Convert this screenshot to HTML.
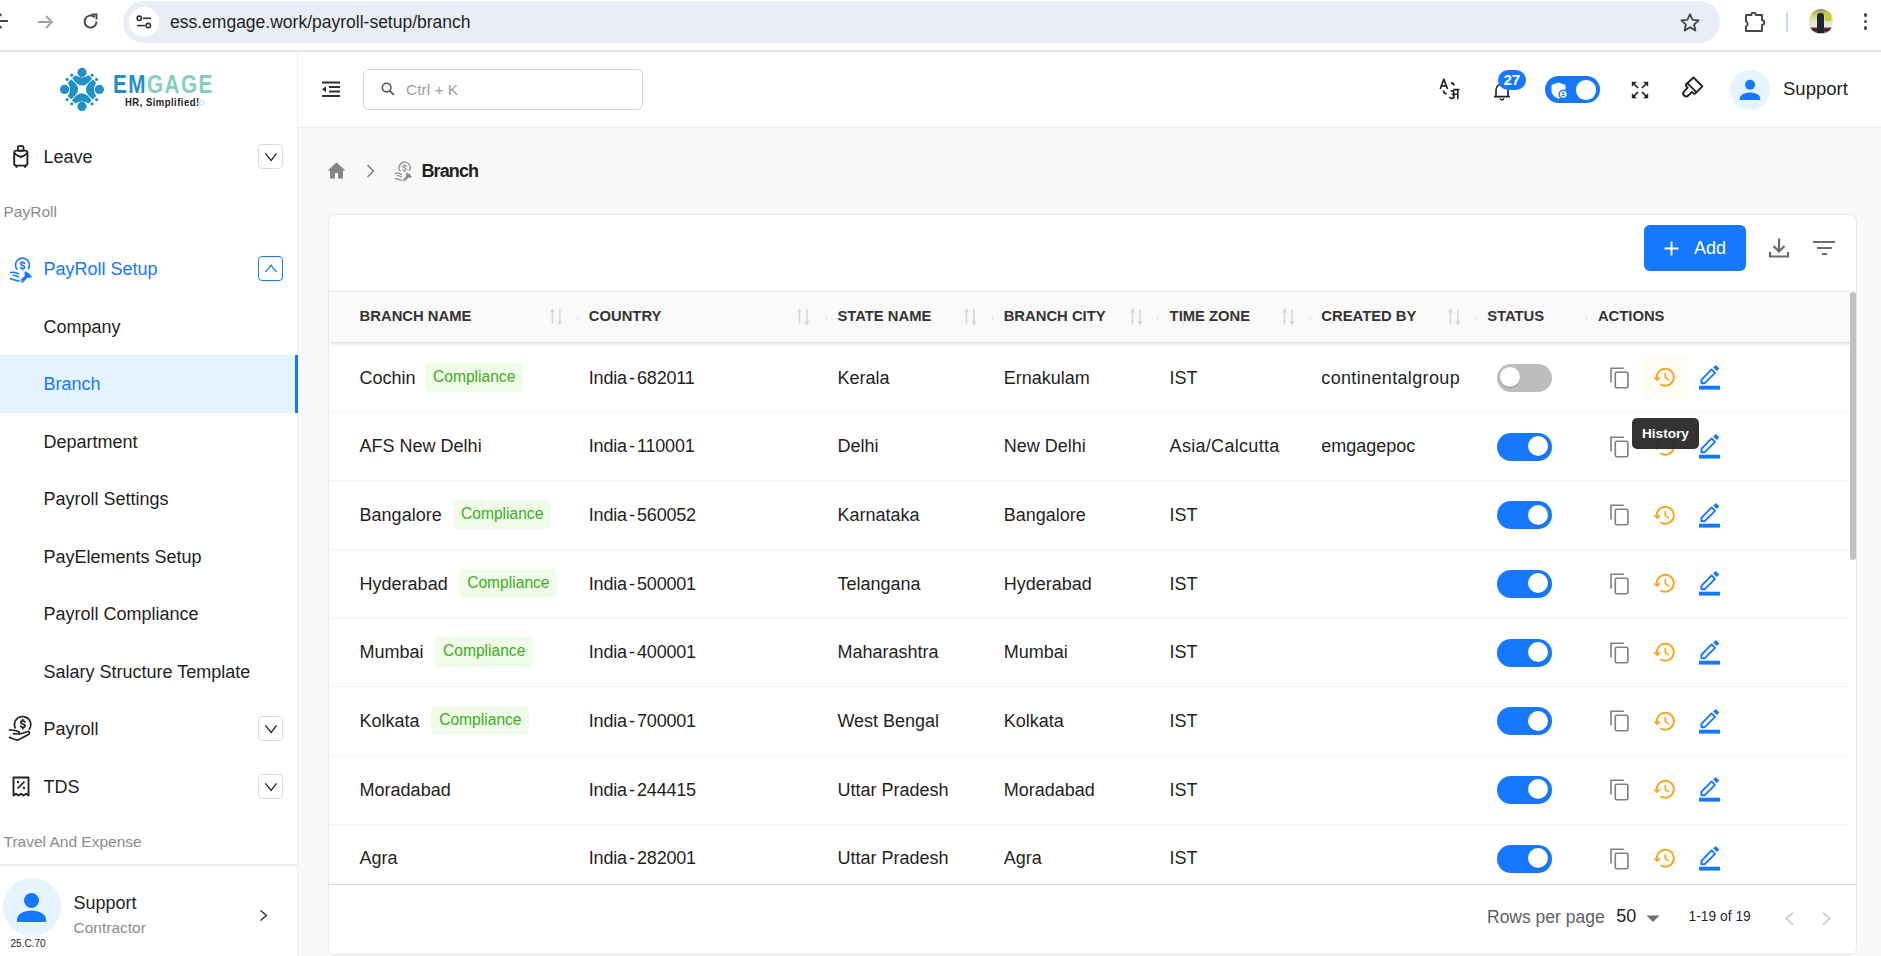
<!DOCTYPE html>
<html><head><meta charset="utf-8"><style>
*{box-sizing:border-box;margin:0;padding:0}
html,body{width:1881px;height:956px;overflow:hidden;background:#fff;font-family:"Liberation Sans",sans-serif;color:#212121}
.t{position:absolute;line-height:1;white-space:nowrap}
.b{position:absolute}
svg.b{overflow:visible}
</style></head><body>
<div class="b" style="left:0px;top:0px;width:1881px;height:50px;background:#fff"></div>
<div class="b" style="left:0px;top:50px;width:1881px;height:2px;background:#e1e3e6"></div>
<svg class="b" style="left:-9px;top:12px;" width="18" height="18" viewBox="0 0 18 18"><path d="M17 9H3.5M10.5 2L3.5 9l7 7" stroke="#474747" stroke-width="1.9" fill="none"/></svg>
<svg class="b" style="left:37px;top:14px;" width="17" height="16" viewBox="0 0 17 16"><path d="M1 8h14M9 2l6 6-6 6" stroke="#a0a0a0" stroke-width="1.8" fill="none"/></svg>
<svg class="b" style="left:82px;top:13px;" width="17" height="17" viewBox="0 0 17 17"><path d="M14.5 8.5A6 6 0 1 1 12.6 4.2" stroke="#474747" stroke-width="1.9" fill="none"/><path d="M9.5 1.5h5v5" stroke="#474747" stroke-width="1.9" fill="none"/></svg>
<div class="b" style="left:123px;top:1px;width:1597px;height:42px;background:#e9eef6;border-radius:21px"></div>
<div class="b" style="left:129px;top:7px;width:30px;height:30px;background:#fff;border-radius:50%"></div>
<svg class="b" style="left:136px;top:15px;" width="16" height="14" viewBox="0 0 16 14"><circle cx="3.3" cy="3.3" r="2.2" stroke="#333" stroke-width="1.6" fill="none"/><path d="M7 3.3h8" stroke="#333" stroke-width="1.6"/><circle cx="12.3" cy="10.6" r="2.2" stroke="#333" stroke-width="1.6" fill="none"/><path d="M1 10.6h8" stroke="#333" stroke-width="1.6"/></svg>
<div class="t" style="left:170px;top:13.99px;font-size:17.5px;color:#1f1f1f;font-weight:normal;">ess.emgage.work/payroll-setup/branch</div>
<svg class="b" style="left:1679px;top:11.6px;" width="22" height="22" viewBox="0 0 22 22"><path d="M11 2.2l2.6 5.6 6.1.6-4.6 4.1 1.3 6-5.4-3.1-5.4 3.1 1.3-6L2.3 8.4l6.1-.6z" stroke="#474747" stroke-width="1.8" fill="none" stroke-linejoin="round"/></svg>
<svg class="b" style="left:1743px;top:9px;" width="24" height="24" viewBox="0 0 24 24"><path d="M3 6h5.3a2.3 2.3 0 0 1 4.6 0H19v5.3a2.3 2.3 0 0 1 0 4.6V22H3v-4.8a2.4 2.4 0 0 0 0-4.6z" stroke="#474747" stroke-width="1.9" fill="none" stroke-linejoin="round"/></svg>
<div class="b" style="left:1785.7px;top:12px;width:2px;height:19.5px;background:#c5d8fa;border-radius:1px"></div>
<div class="b" style="left:1808.5px;top:9px;width:24.6px;height:24.6px;border-radius:50%;overflow:hidden;background:linear-gradient(180deg,#9a8f6a 0%,#d8d36a 25%,#e8e6dc 55%,#efe9df 70%,#6a2a2a 78%,#3a2020 86%,#d9c9a9 100%)"><div style="position:absolute;left:8px;top:4px;width:7px;height:20px;background:#1f2633;border-radius:3px 3px 0 0"></div><div style="position:absolute;left:16px;top:3px;width:6px;height:9px;background:#c8cc30"></div></div>
<div class="b" style="left:1863.5px;top:12.799999999999999px;width:3.8px;height:3.8px;background:#474747;border-radius:50%"></div>
<div class="b" style="left:1863.5px;top:19.6px;width:3.8px;height:3.8px;background:#474747;border-radius:50%"></div>
<div class="b" style="left:1863.5px;top:26.400000000000002px;width:3.8px;height:3.8px;background:#474747;border-radius:50%"></div>
<div class="b" style="left:0px;top:52px;width:297px;height:904px;background:#fff"></div>
<div class="b" style="left:297px;top:52px;width:1px;height:904px;background:#eeeeee"></div>
<svg class="b" style="left:59px;top:66px;" width="46" height="46" viewBox="0 0 46 46"><g transform="translate(23 23.4)" fill="#2190c6">
<circle cx="0" cy="-17" r="4.6"/><circle cx="0" cy="17" r="4.6"/><circle cx="-17.4" cy="0" r="4.6"/><circle cx="17.4" cy="0" r="4.6"/>
<path d="M-9.8 -11.2L-6.6 -14.1Q0 -9.9 6.7 -14.1L10.1 -11Q0 3.3 -9.8 -11.2Z"/><path d="M-9.8 -11.2L-6.6 -14.1Q0 -9.9 6.7 -14.1L10.1 -11Q0 3.3 -9.8 -11.2Z" transform="rotate(90)"/><path d="M-9.8 -11.2L-6.6 -14.1Q0 -9.9 6.7 -14.1L10.1 -11Q0 3.3 -9.8 -11.2Z" transform="rotate(180)"/><path d="M-9.8 -11.2L-6.6 -14.1Q0 -9.9 6.7 -14.1L10.1 -11Q0 3.3 -9.8 -11.2Z" transform="rotate(270)"/>
<circle cx="-10.3" cy="-14.2" r="1.6"/><circle cx="10.1" cy="-14.2" r="1.6"/><circle cx="-14.8" cy="-10" r="1.6"/><circle cx="14.5" cy="-10" r="1.6"/>
<circle cx="-14.8" cy="10.2" r="1.6"/><circle cx="14.5" cy="10.2" r="1.6"/><circle cx="-10.3" cy="14.4" r="1.6"/><circle cx="10.1" cy="14.4" r="1.6"/>
</g></svg>
<svg class="b" style="left:110px;top:70px;" width="110" height="40" viewBox="0 0 110 40"><g transform="translate(3 23.4) scale(0.8 1)"><text x="0" y="0" font-family="Liberation Sans" font-weight="bold" font-size="25.8" letter-spacing="1.9"><tspan fill="#2190c6">EM</tspan><tspan fill="#86d0b6">GAGE</tspan></text></g>
<g transform="translate(15 36) scale(0.85 1)"><text x="0" y="0" font-family="Liberation Sans" font-weight="bold" font-size="11.2" fill="#222" letter-spacing="0.55">HR, Simplified!</text></g>
<circle cx="91.7" cy="33" r="2.3" stroke="#8ccbed" stroke-width="0.8" fill="none"/></svg>
<svg class="b" style="left:12px;top:145px;" width="18" height="23" viewBox="0 0 18 23"><rect x="5.9" y="1.2" width="5.6" height="4.6" rx="0.8" stroke="#222" stroke-width="1.8" fill="none"/><rect x="2.2" y="5.6" width="13.2" height="15" rx="2" stroke="#222" stroke-width="1.9" fill="none"/><path d="M2.4 8.2Q8.8 15 15.2 8.2M8.8 11.6v1.6" stroke="#222" stroke-width="1.7" fill="none"/><path d="M4.5 20.8v1M13.1 20.8v1" stroke="#222" stroke-width="2.2" stroke-linecap="round"/></svg>
<div class="t" style="left:43.5px;top:147.96px;font-size:18px;color:#1f1f1f;font-weight:normal;">Leave</div>
<div class="b" style="left:258px;top:144px;width:25px;height:25px;border:1px solid #dcdcdc;border-radius:4px;background:#fff"></div>
<svg class="b" style="left:258px;top:144px;" width="25" height="25" viewBox="0 0 25 25"><path d="M7.3 9.3L13.2 16.4L18.6 9.3" stroke="#222" stroke-width="1.25" fill="none"/></svg>
<div class="t" style="left:3.5px;top:203.88px;font-size:15.5px;color:#8c8c8c;font-weight:normal;">PayRoll</div>
<svg class="b" style="left:9px;top:258px;" width="23" height="24" viewBox="0 0 23 24"><g stroke="#1677ff" fill="none" stroke-width="1.6" stroke-linecap="round">
<path d="M7.84 11.21A7 7 0 1 1 19.5 10.7"/>
<path d="M15.6 5.6c-.5-.8-1.3-1.1-2.1-1.1-1.1 0-2 .6-2 1.5 0 1.9 4.2 1.1 4.2 3.1 0 1-.9 1.5-2.1 1.5-.9 0-1.7-.4-2.2-1.1M13.5 3.7v.9M13.5 10.6v1.2"/>
<path d="M1.6 14.5c2.5-.6 5.5-.3 8 1.4M4.4 17.3c2 .1 3.8.6 5.2 1.5M1.6 20.8c2.5.8 5.5 1.6 8 2.3"/>
</g>
<path d="M13 23L19.2 16.6" stroke="#1677ff" stroke-width="3.3" stroke-linecap="round"/>
<path d="M17.4 13.8a3.1 3.1 0 0 0 4.6 4" stroke="#1677ff" stroke-width="2.8" fill="none"/>
<circle cx="13" cy="23" r="0.7" fill="#fff"/></svg>
<div class="t" style="left:43.5px;top:260.46px;font-size:18px;color:#1677ff;font-weight:normal;">PayRoll Setup</div>
<div class="b" style="left:258px;top:256px;width:25px;height:25px;border:1px solid #1677ff;border-radius:4px;background:#fff"></div>
<svg class="b" style="left:258px;top:256px;" width="25" height="25" viewBox="0 0 25 25"><path d="M7.3 16.2L13 9.3L18.6 16.2" stroke="#1677ff" stroke-width="1.25" fill="none"/></svg>
<div class="b" style="left:0px;top:355px;width:295px;height:58px;background:#e6f4ff"></div>
<div class="b" style="left:295px;top:355px;width:2.5px;height:58px;background:#1677ff"></div>
<div class="t" style="left:43.5px;top:317.76px;font-size:18px;color:#1f1f1f;font-weight:normal;">Company</div>
<div class="t" style="left:43.5px;top:374.96px;font-size:18px;color:#1677ff;font-weight:normal;">Branch</div>
<div class="t" style="left:43.5px;top:432.96px;font-size:18px;color:#1f1f1f;font-weight:normal;">Department</div>
<div class="t" style="left:43.5px;top:489.96px;font-size:18px;color:#1f1f1f;font-weight:normal;">Payroll Settings</div>
<div class="t" style="left:43.5px;top:547.56px;font-size:18px;color:#1f1f1f;font-weight:normal;">PayElements Setup</div>
<div class="t" style="left:43.5px;top:604.76px;font-size:18px;color:#1f1f1f;font-weight:normal;">Payroll Compliance</div>
<div class="t" style="left:43.5px;top:662.56px;font-size:18px;color:#1f1f1f;font-weight:normal;">Salary Structure Template</div>
<svg class="b" style="left:9px;top:716px;" width="24" height="26" viewBox="0 0 24 26"><g stroke="#222" fill="none" stroke-width="1.7" stroke-linecap="round" stroke-linejoin="round">
<path d="M6.17 11.83A8.1 8.1 0 1 1 20.26 13.21"/>
<path d="M15.9 6c-.5-.8-1.2-1.1-2.1-1.1-1.1 0-2 .6-2 1.6 0 2 4.3 1.1 4.3 3.2 0 1-.9 1.6-2.2 1.6-1 0-1.8-.4-2.3-1.1M13.8 3.6v1.2M13.8 11.4v1.3"/>
<path d="M0.6 14.2C3.5 13.6 6.5 14.3 9.5 15.6C11 16.3 10.5 18 9 18L4.5 17.6"/>
<path d="M0.6 21.4C3.5 22.6 6 23.8 8.6 24.2L19.5 18.4C21.2 17.4 20.6 15.2 18.6 15.7L10.6 18"/>
</g></svg>
<div class="t" style="left:43.5px;top:720.16px;font-size:18px;color:#1f1f1f;font-weight:normal;">Payroll</div>
<div class="b" style="left:258px;top:716px;width:25px;height:25px;border:1px solid #dcdcdc;border-radius:4px;background:#fff"></div>
<svg class="b" style="left:258px;top:716px;" width="25" height="25" viewBox="0 0 25 25"><path d="M7.3 9.3L13.2 16.4L18.6 9.3" stroke="#222" stroke-width="1.25" fill="none"/></svg>
<svg class="b" style="left:12px;top:776px;" width="18" height="21" viewBox="0 0 18 21"><path d="M1.5 1.5h15v18l-2.5-1.8-2.5 1.8-2.5-1.8-2.5 1.8-2.5-1.8-2.5 1.8z" stroke="#222" stroke-width="1.9" fill="none" stroke-linejoin="round"/><path d="M5.5 12.5l7-7" stroke="#222" stroke-width="1.7"/><circle cx="6" cy="6" r="1.2" fill="#222"/><circle cx="12" cy="12" r="1.2" fill="#222"/></svg>
<div class="t" style="left:43.5px;top:777.96px;font-size:18px;color:#1f1f1f;font-weight:normal;">TDS</div>
<div class="b" style="left:258px;top:774px;width:25px;height:25px;border:1px solid #dcdcdc;border-radius:4px;background:#fff"></div>
<svg class="b" style="left:258px;top:774px;" width="25" height="25" viewBox="0 0 25 25"><path d="M7.3 9.3L13.2 16.4L18.6 9.3" stroke="#222" stroke-width="1.25" fill="none"/></svg>
<div class="t" style="left:3.5px;top:834.18px;font-size:15.5px;color:#8c8c8c;font-weight:normal;">Travel And Expense</div>
<div class="b" style="left:0px;top:864px;width:297px;height:2px;background:#eeeeee"></div>
<div class="b" style="left:3px;top:878px;width:58px;height:58px;background:#e6f4ff;border-radius:50%"></div>
<svg class="b" style="left:16px;top:892px;" width="31" height="31" viewBox="0 0 31 31"><circle cx="15.5" cy="8.5" r="7.5" fill="#1677ff"/><path d="M1 30v-2.5C1 22 8 18.5 15.5 18.5S30 22 30 27.5V30z" fill="#1677ff"/></svg>
<div class="t" style="left:73.5px;top:893.76px;font-size:18px;color:#1f1f1f;font-weight:normal;">Support</div>
<div class="t" style="left:73.5px;top:920.48px;font-size:15.5px;color:#8c8c8c;font-weight:normal;">Contractor</div>
<svg class="b" style="left:259px;top:909px;" width="10" height="13" viewBox="0 0 10 13"><path d="M1.5 1.5l6 5-6 5" stroke="#333" stroke-width="1.5" fill="none"/></svg>
<div class="t" style="left:10.5px;top:938.53px;font-size:10px;color:#222;font-weight:normal;">25.C.70</div>
<div class="b" style="left:298px;top:52px;width:1583px;height:76px;background:#fff"></div>
<div class="b" style="left:298px;top:127px;width:1583px;height:1px;background:#eeeeee"></div>
<svg class="b" style="left:321px;top:81px;" width="20" height="17" viewBox="0 0 20 17"><path d="M1 1.5h18M8 6h11M8 10.5h11M1 15h18" stroke="#333" stroke-width="2"/><path d="M1 8.3l4-3v6z" fill="#333"/></svg>
<div class="b" style="left:363px;top:69px;width:280px;height:41px;border:1px solid #d6d6d6;border-radius:6px;background:#fff"></div>
<svg class="b" style="left:381px;top:82px;" width="14" height="14" viewBox="0 0 14 14"><circle cx="5.6" cy="5.6" r="4.3" stroke="#555" stroke-width="1.6" fill="none"/><path d="M8.8 8.8l4 4" stroke="#555" stroke-width="1.7"/></svg>
<div class="t" style="left:406px;top:82.38px;font-size:15.5px;color:#9e9e9e;font-weight:normal;">Ctrl + K</div>
<svg class="b" style="left:1438px;top:77px;" width="24" height="25" viewBox="0 0 24 25"><path d="M2.2 12L5.8 2.2 9.6 12M3.5 8.8h4.8" stroke="#222" stroke-width="1.7" fill="none" stroke-linejoin="round"/>
<path d="M13 5.8c1.6 0 3 1.1 3 2.7M5.6 13.6c0 1.8 1.2 3.2 3 3.3" stroke="#222" stroke-width="1.7" fill="none"/>
<path d="M12.6 14.3c1.2-.9 3.2-.6 3.2 1.1 0 1.2-1 1.8-2 1.8 1.3 0 2.4.6 2.4 2 0 1.5-1.3 2.2-2.6 2.2-1.1 0-1.8-.5-2.2-1.2M16.2 17.3h3.4M19.8 12.6v9.6M15.2 12.6h6.2" stroke="#222" stroke-width="1.6" fill="none"/></svg>
<svg class="b" style="left:1493px;top:81px;" width="18" height="20" viewBox="0 0 18 20"><path d="M3 15.5V9a6 6 0 0 1 12 0v6.5M1 15.6h16" stroke="#222" stroke-width="1.6" fill="none"/><path d="M7.3 17.2a1.7 1.7 0 0 0 3.4 0" stroke="#222" stroke-width="1.5" fill="none"/></svg>
<div class="b" style="left:1498px;top:70px;width:28px;height:20px;background:#1677ff;border-radius:10px"></div>
<div class="t" style="left:1503.5px;top:72.33px;font-size:15.2px;color:#fff;font-weight:bold;letter-spacing:-0.3px">27</div>
<div class="b" style="left:1545px;top:76px;width:55px;height:27px;background:#1677ff;border-radius:14px"></div>
<div class="b" style="left:1576px;top:80px;width:19.5px;height:19.5px;background:#fff;border-radius:50%"></div>
<svg class="b" style="left:1551px;top:82px;" width="18" height="17" viewBox="0 0 18 17"><path d="M7.5 0.5l7 2.5v5.5c0 4-3 6.8-7 8.2-4-1.4-7-4.2-7-8.2V3z" fill="#fff"/><circle cx="12.3" cy="12.3" r="4.2" fill="#1677ff" stroke="#1677ff" stroke-width="1.2"/><circle cx="12.3" cy="12.3" r="3.4" fill="#fff"/><circle cx="12.3" cy="11.2" r="1.1" fill="#1677ff"/><path d="M10.4 14.3a1.9 1.6 0 0 1 3.8 0z" fill="#1677ff"/></svg>
<svg class="b" style="left:1630px;top:80px;" width="20" height="20" viewBox="0 0 20 20"><g stroke="#222" stroke-width="1.7" fill="none"><path d="M3.5 3.5l4.5 4.5M16.5 3.5L12 8M3.5 16.5L8 12M16.5 16.5L12 12"/></g><g fill="#222"><path d="M1.8 1.8h5L1.8 6.8z"/><path d="M18.2 1.8h-5l5 5z"/><path d="M1.8 18.2h5l-5-5z"/><path d="M18.2 18.2h-5l5-5z"/></g></svg>
<svg class="b" style="left:1681px;top:76px;" width="23" height="23" viewBox="0 0 23 23"><g stroke="#222" stroke-width="1.9" fill="none" stroke-linejoin="round"><path d="M12.5 1.5L21.4 10.4 14.6 17.2Q13.4 18.4 12.2 17.2L10.9 15.9 7.3 19.5Q5.2 21.6 3.1 19.5Q1 17.4 3.1 15.3L6.7 11.7 5.4 10.4Q4.2 9.2 5.4 8ZM6.6 7.4L15.6 16.4"/></g></svg>
<div class="b" style="left:1730px;top:70px;width:40px;height:40px;background:#e6f4ff;border-radius:50%"></div>
<svg class="b" style="left:1739px;top:79px;" width="22" height="22" viewBox="0 0 22 22"><circle cx="11" cy="5.7" r="5" fill="#1677ff"/><path d="M0.8 21v-1.5C0.8 15.8 6 13.6 11 13.6s10.2 2.2 10.2 5.9V21z" fill="#1677ff"/></svg>
<div class="t" style="left:1783px;top:79.94px;font-size:18.5px;color:#1f1f1f;font-weight:normal;">Support</div>
<div class="b" style="left:298px;top:128px;width:1583px;height:828px;background:#f9f9f9"></div>
<svg class="b" style="left:327px;top:162px;" width="19" height="17" viewBox="0 0 19 17"><path d="M9.5 0.5L0.5 8.5h2.5v8h5v-5.5h3v5.5h5v-8h2.5z" fill="#858585"/></svg>
<svg class="b" style="left:366px;top:164px;" width="10" height="14" viewBox="0 0 10 14"><path d="M1.5 1l6 6-6 6" stroke="#858585" stroke-width="1.7" fill="none"/></svg>
<svg class="b" style="left:394px;top:162px;" width="18" height="19" viewBox="0 0 23 24"><g stroke="#8a8a8a" fill="none" stroke-width="1.6" stroke-linecap="round">
<path d="M7.84 11.21A7 7 0 1 1 19.5 10.7"/>
<path d="M15.6 5.6c-.5-.8-1.3-1.1-2.1-1.1-1.1 0-2 .6-2 1.5 0 1.9 4.2 1.1 4.2 3.1 0 1-.9 1.5-2.1 1.5-.9 0-1.7-.4-2.2-1.1M13.5 3.7v.9M13.5 10.6v1.2"/>
<path d="M1.6 14.5c2.5-.6 5.5-.3 8 1.4M4.4 17.3c2 .1 3.8.6 5.2 1.5M1.6 20.8c2.5.8 5.5 1.6 8 2.3"/>
</g>
<path d="M13 23L19.2 16.6" stroke="#8a8a8a" stroke-width="3.3" stroke-linecap="round"/>
<path d="M17.4 13.8a3.1 3.1 0 0 0 4.6 4" stroke="#8a8a8a" stroke-width="2.8" fill="none"/>
<circle cx="13" cy="23" r="0.7" fill="#fff"/></svg>
<div class="t" style="left:421.5px;top:161.56px;font-size:18px;color:#1f1f1f;font-weight:bold;letter-spacing:-0.9px">Branch</div>
<div class="b" style="left:328px;top:214px;width:1529px;height:741px;background:#fff;border:1px solid #e3e8ee;border-radius:7px"></div>
<div class="b" style="left:1644px;top:225px;width:102px;height:46px;background:#1677ff;border-radius:6px"></div>
<svg class="b" style="left:1664px;top:241px;" width="15" height="15" viewBox="0 0 15 15"><path d="M7.5 0.5v14M0.5 7.5h14" stroke="#fff" stroke-width="2"/></svg>
<div class="t" style="left:1694px;top:238.66px;font-size:18px;color:#fff;font-weight:normal;">Add</div>
<svg class="b" style="left:1768px;top:237px;" width="22" height="22" viewBox="0 0 22 22"><path d="M11 1.5v12.5M5.5 9l5.5 5.5L16.5 9" stroke="#6b6b6b" stroke-width="2.2" fill="none"/><path d="M2 15v4.5h18V15" stroke="#6b6b6b" stroke-width="2.2" fill="none"/></svg>
<div class="b" style="left:1813px;top:241px;width:22px;height:2.2px;background:#6b6b6b"></div>
<div class="b" style="left:1816.5px;top:247px;width:15px;height:2.2px;background:#6b6b6b"></div>
<div class="b" style="left:1821.5px;top:253px;width:5px;height:2.2px;background:#6b6b6b"></div>
<div class="b" style="left:329px;top:291px;width:1521px;height:51px;background:#fafafa;border-top:1px solid #e6e6e6"></div>
<div class="b" style="left:330px;top:342px;width:1520px;height:1px;background:#e3e3e3"></div>
<div class="b" style="left:330px;top:343px;width:1520px;height:4px;background:linear-gradient(#ececec,rgba(255,255,255,0))"></div>
<div class="t" style="left:359.6px;top:308.87px;font-size:14.8px;color:#333;font-weight:bold;">BRANCH NAME</div>
<svg class="b" style="left:549px;top:307px;" width="15" height="18" viewBox="0 0 15 18"><path d="M3.4 17V4.5M10.9 2.2V15" stroke="#d6d6d6" stroke-width="1.5"/><path d="M0.8 5.6L3.4 1.4 6 5.6z M8.3 14.3h5.2L10.9 18.4z" fill="#d6d6d6"/></svg>
<div class="t" style="left:588.8px;top:308.87px;font-size:14.8px;color:#333;font-weight:bold;">COUNTRY</div>
<svg class="b" style="left:796px;top:307px;" width="15" height="18" viewBox="0 0 15 18"><path d="M3.4 17V4.5M10.9 2.2V15" stroke="#d6d6d6" stroke-width="1.5"/><path d="M0.8 5.6L3.4 1.4 6 5.6z M8.3 14.3h5.2L10.9 18.4z" fill="#d6d6d6"/></svg>
<div class="t" style="left:837.4px;top:308.87px;font-size:14.8px;color:#333;font-weight:bold;">STATE NAME</div>
<svg class="b" style="left:963px;top:307px;" width="15" height="18" viewBox="0 0 15 18"><path d="M3.4 17V4.5M10.9 2.2V15" stroke="#d6d6d6" stroke-width="1.5"/><path d="M0.8 5.6L3.4 1.4 6 5.6z M8.3 14.3h5.2L10.9 18.4z" fill="#d6d6d6"/></svg>
<div class="t" style="left:1003.7px;top:308.87px;font-size:14.8px;color:#333;font-weight:bold;">BRANCH CITY</div>
<svg class="b" style="left:1129px;top:307px;" width="15" height="18" viewBox="0 0 15 18"><path d="M3.4 17V4.5M10.9 2.2V15" stroke="#d6d6d6" stroke-width="1.5"/><path d="M0.8 5.6L3.4 1.4 6 5.6z M8.3 14.3h5.2L10.9 18.4z" fill="#d6d6d6"/></svg>
<div class="t" style="left:1169.6px;top:308.87px;font-size:14.8px;color:#333;font-weight:bold;">TIME ZONE</div>
<svg class="b" style="left:1281px;top:307px;" width="15" height="18" viewBox="0 0 15 18"><path d="M3.4 17V4.5M10.9 2.2V15" stroke="#d6d6d6" stroke-width="1.5"/><path d="M0.8 5.6L3.4 1.4 6 5.6z M8.3 14.3h5.2L10.9 18.4z" fill="#d6d6d6"/></svg>
<div class="t" style="left:1321.3px;top:308.87px;font-size:14.8px;color:#333;font-weight:bold;">CREATED BY</div>
<svg class="b" style="left:1447px;top:307px;" width="15" height="18" viewBox="0 0 15 18"><path d="M3.4 17V4.5M10.9 2.2V15" stroke="#d6d6d6" stroke-width="1.5"/><path d="M0.8 5.6L3.4 1.4 6 5.6z M8.3 14.3h5.2L10.9 18.4z" fill="#d6d6d6"/></svg>
<div class="t" style="left:1487.2px;top:308.87px;font-size:14.8px;color:#333;font-weight:bold;">STATUS</div>
<div class="t" style="left:1597.9px;top:308.87px;font-size:14.8px;color:#333;font-weight:bold;">ACTIONS</div>
<div class="b" style="left:577.3px;top:315.5px;width:1px;height:5.5px;background:#e6e6e6"></div>
<div class="b" style="left:826.4px;top:315.5px;width:1px;height:5.5px;background:#e6e6e6"></div>
<div class="b" style="left:991.5px;top:315.5px;width:1px;height:5.5px;background:#e6e6e6"></div>
<div class="b" style="left:1157.3px;top:315.5px;width:1px;height:5.5px;background:#e6e6e6"></div>
<div class="b" style="left:1310.1px;top:315.5px;width:1px;height:5.5px;background:#e6e6e6"></div>
<div class="b" style="left:1476px;top:315.5px;width:1px;height:5.5px;background:#e6e6e6"></div>
<div class="b" style="left:1586.2px;top:315.5px;width:1px;height:5.5px;background:#e6e6e6"></div>
<div class="b" style="left:1850px;top:292px;width:6px;height:268px;background:#c1c1c1;border-radius:3px"></div>
<div class="t" style="left:359.6px;top:368.50px;font-size:18px;color:#1f1f1f;font-weight:normal;">Cochin</div>
<div class="b" style="left:425px;top:362.53499999999997px;width:97.7px;height:29.6px;background:#f0fce9;border-radius:5px"></div>
<div class="t" style="left:433px;top:368.53px;font-size:15.6px;color:#3ead1d;font-weight:normal;">Compliance</div>
<div class="t" style="left:588.8px;top:368.50px;font-size:18px;color:#1f1f1f;font-weight:normal;word-spacing:-2.6px;letter-spacing:-0.2px">India - 682011</div>
<div class="t" style="left:837.4px;top:368.50px;font-size:18px;color:#1f1f1f;font-weight:normal;">Kerala</div>
<div class="t" style="left:1003.7px;top:368.50px;font-size:18px;color:#1f1f1f;font-weight:normal;">Ernakulam</div>
<div class="t" style="left:1169.6px;top:368.50px;font-size:18px;color:#1f1f1f;font-weight:normal;">IST</div>
<div class="t" style="left:1321.3px;top:368.50px;font-size:18px;color:#1f1f1f;font-weight:normal;letter-spacing:0.35px">continentalgroup</div>
<div class="b" style="left:1497px;top:363.835px;width:55px;height:28px;background:#bdbdbd;border-radius:14px"></div>
<div class="b" style="left:1500px;top:367.335px;width:20px;height:20px;background:#fff;border-radius:50%;box-shadow:0 1px 1px rgba(0,0,0,.25)"></div>
<svg class="b" style="left:1609px;top:366.03499999999997px;" width="21" height="24" viewBox="0 0 21 24"><path d="M2 16.5V2.2H14.8" stroke="#7f7f7f" stroke-width="1.6" fill="none"/><rect x="6.3" y="6.2" width="12.6" height="15.5" rx="1.5" stroke="#7f7f7f" stroke-width="1.6" fill="none"/></svg>
<div class="b" style="left:1642px;top:354.835px;width:45px;height:45px;background:#fffcf5;border-radius:7px"></div>
<svg class="b" style="left:1652px;top:367.335px;" width="24" height="20" viewBox="0 0 24 20"><path d="M4.8 10.2A8.5 8.5 0 1 1 8.4 17.2" stroke="#f7a51c" stroke-width="1.9" fill="none"/><path d="M1.2 10.2h7.6L5.2 14.2z" fill="#f7a51c"/><path d="M13.3 6v4.6l3.6 2.6" stroke="#f7a51c" stroke-width="1.6" fill="none"/></svg>
<svg class="b" style="left:1698px;top:365.335px;" width="24" height="25" viewBox="0 0 24 25"><path d="M3.4 14.8L13.6 4.4 17 7.8 6.8 18.2H3.4z" fill="none" stroke="#1677ff" stroke-width="1.9" stroke-linejoin="round"/><path d="M15.2 2.6l2.6-2.6 3.5 3.5-2.6 2.6z" fill="#1677ff"/><rect x="1" y="20.7" width="21" height="3.9" fill="#1677ff"/></svg>
<div class="b" style="left:329px;top:412px;width:1521px;height:1px;background:#f4f4f4"></div>
<div class="t" style="left:359.6px;top:437.17px;font-size:18px;color:#1f1f1f;font-weight:normal;">AFS New Delhi</div>
<div class="t" style="left:588.8px;top:437.17px;font-size:18px;color:#1f1f1f;font-weight:normal;word-spacing:-2.6px;letter-spacing:-0.2px">India - 110001</div>
<div class="t" style="left:837.4px;top:437.17px;font-size:18px;color:#1f1f1f;font-weight:normal;">Delhi</div>
<div class="t" style="left:1003.7px;top:437.17px;font-size:18px;color:#1f1f1f;font-weight:normal;">New Delhi</div>
<div class="t" style="left:1169.6px;top:437.17px;font-size:18px;color:#1f1f1f;font-weight:normal;letter-spacing:0.3px">Asia/Calcutta</div>
<div class="t" style="left:1321.3px;top:437.17px;font-size:18px;color:#1f1f1f;font-weight:normal;">emgagepoc</div>
<div class="b" style="left:1497px;top:432.505px;width:55px;height:28px;background:#1677ff;border-radius:14px"></div>
<div class="b" style="left:1527.5px;top:436.005px;width:20px;height:20px;background:#fff;border-radius:50%;box-shadow:0 1px 1px rgba(0,0,0,.12)"></div>
<svg class="b" style="left:1609px;top:434.705px;" width="21" height="24" viewBox="0 0 21 24"><path d="M2 16.5V2.2H14.8" stroke="#7f7f7f" stroke-width="1.6" fill="none"/><rect x="6.3" y="6.2" width="12.6" height="15.5" rx="1.5" stroke="#7f7f7f" stroke-width="1.6" fill="none"/></svg>
<svg class="b" style="left:1652px;top:436.005px;" width="24" height="20" viewBox="0 0 24 20"><path d="M4.8 10.2A8.5 8.5 0 1 1 8.4 17.2" stroke="#f7a51c" stroke-width="1.9" fill="none"/><path d="M1.2 10.2h7.6L5.2 14.2z" fill="#f7a51c"/><path d="M13.3 6v4.6l3.6 2.6" stroke="#f7a51c" stroke-width="1.6" fill="none"/></svg>
<svg class="b" style="left:1698px;top:434.005px;" width="24" height="25" viewBox="0 0 24 25"><path d="M3.4 14.8L13.6 4.4 17 7.8 6.8 18.2H3.4z" fill="none" stroke="#1677ff" stroke-width="1.9" stroke-linejoin="round"/><path d="M15.2 2.6l2.6-2.6 3.5 3.5-2.6 2.6z" fill="#1677ff"/><rect x="1" y="20.7" width="21" height="3.9" fill="#1677ff"/></svg>
<div class="b" style="left:329px;top:480px;width:1521px;height:1px;background:#f4f4f4"></div>
<div class="t" style="left:359.6px;top:505.84px;font-size:18px;color:#1f1f1f;font-weight:normal;">Bangalore</div>
<div class="b" style="left:453px;top:499.87500000000006px;width:97.7px;height:29.6px;background:#f0fce9;border-radius:5px"></div>
<div class="t" style="left:461px;top:505.87px;font-size:15.6px;color:#3ead1d;font-weight:normal;">Compliance</div>
<div class="t" style="left:588.8px;top:505.84px;font-size:18px;color:#1f1f1f;font-weight:normal;word-spacing:-2.6px;letter-spacing:-0.2px">India - 560052</div>
<div class="t" style="left:837.4px;top:505.84px;font-size:18px;color:#1f1f1f;font-weight:normal;">Karnataka</div>
<div class="t" style="left:1003.7px;top:505.84px;font-size:18px;color:#1f1f1f;font-weight:normal;">Bangalore</div>
<div class="t" style="left:1169.6px;top:505.84px;font-size:18px;color:#1f1f1f;font-weight:normal;">IST</div>
<div class="b" style="left:1497px;top:501.17500000000007px;width:55px;height:28px;background:#1677ff;border-radius:14px"></div>
<div class="b" style="left:1527.5px;top:504.67500000000007px;width:20px;height:20px;background:#fff;border-radius:50%;box-shadow:0 1px 1px rgba(0,0,0,.12)"></div>
<svg class="b" style="left:1609px;top:503.37500000000006px;" width="21" height="24" viewBox="0 0 21 24"><path d="M2 16.5V2.2H14.8" stroke="#7f7f7f" stroke-width="1.6" fill="none"/><rect x="6.3" y="6.2" width="12.6" height="15.5" rx="1.5" stroke="#7f7f7f" stroke-width="1.6" fill="none"/></svg>
<svg class="b" style="left:1652px;top:504.67500000000007px;" width="24" height="20" viewBox="0 0 24 20"><path d="M4.8 10.2A8.5 8.5 0 1 1 8.4 17.2" stroke="#f7a51c" stroke-width="1.9" fill="none"/><path d="M1.2 10.2h7.6L5.2 14.2z" fill="#f7a51c"/><path d="M13.3 6v4.6l3.6 2.6" stroke="#f7a51c" stroke-width="1.6" fill="none"/></svg>
<svg class="b" style="left:1698px;top:502.67500000000007px;" width="24" height="25" viewBox="0 0 24 25"><path d="M3.4 14.8L13.6 4.4 17 7.8 6.8 18.2H3.4z" fill="none" stroke="#1677ff" stroke-width="1.9" stroke-linejoin="round"/><path d="M15.2 2.6l2.6-2.6 3.5 3.5-2.6 2.6z" fill="#1677ff"/><rect x="1" y="20.7" width="21" height="3.9" fill="#1677ff"/></svg>
<div class="b" style="left:329px;top:549px;width:1521px;height:1px;background:#f4f4f4"></div>
<div class="t" style="left:359.6px;top:574.51px;font-size:18px;color:#1f1f1f;font-weight:normal;">Hyderabad</div>
<div class="b" style="left:459.2px;top:568.5450000000001px;width:97.7px;height:29.6px;background:#f0fce9;border-radius:5px"></div>
<div class="t" style="left:467.2px;top:574.54px;font-size:15.6px;color:#3ead1d;font-weight:normal;">Compliance</div>
<div class="t" style="left:588.8px;top:574.51px;font-size:18px;color:#1f1f1f;font-weight:normal;word-spacing:-2.6px;letter-spacing:-0.2px">India - 500001</div>
<div class="t" style="left:837.4px;top:574.51px;font-size:18px;color:#1f1f1f;font-weight:normal;">Telangana</div>
<div class="t" style="left:1003.7px;top:574.51px;font-size:18px;color:#1f1f1f;font-weight:normal;">Hyderabad</div>
<div class="t" style="left:1169.6px;top:574.51px;font-size:18px;color:#1f1f1f;font-weight:normal;">IST</div>
<div class="b" style="left:1497px;top:569.845px;width:55px;height:28px;background:#1677ff;border-radius:14px"></div>
<div class="b" style="left:1527.5px;top:573.345px;width:20px;height:20px;background:#fff;border-radius:50%;box-shadow:0 1px 1px rgba(0,0,0,.12)"></div>
<svg class="b" style="left:1609px;top:572.0450000000001px;" width="21" height="24" viewBox="0 0 21 24"><path d="M2 16.5V2.2H14.8" stroke="#7f7f7f" stroke-width="1.6" fill="none"/><rect x="6.3" y="6.2" width="12.6" height="15.5" rx="1.5" stroke="#7f7f7f" stroke-width="1.6" fill="none"/></svg>
<svg class="b" style="left:1652px;top:573.345px;" width="24" height="20" viewBox="0 0 24 20"><path d="M4.8 10.2A8.5 8.5 0 1 1 8.4 17.2" stroke="#f7a51c" stroke-width="1.9" fill="none"/><path d="M1.2 10.2h7.6L5.2 14.2z" fill="#f7a51c"/><path d="M13.3 6v4.6l3.6 2.6" stroke="#f7a51c" stroke-width="1.6" fill="none"/></svg>
<svg class="b" style="left:1698px;top:571.345px;" width="24" height="25" viewBox="0 0 24 25"><path d="M3.4 14.8L13.6 4.4 17 7.8 6.8 18.2H3.4z" fill="none" stroke="#1677ff" stroke-width="1.9" stroke-linejoin="round"/><path d="M15.2 2.6l2.6-2.6 3.5 3.5-2.6 2.6z" fill="#1677ff"/><rect x="1" y="20.7" width="21" height="3.9" fill="#1677ff"/></svg>
<div class="b" style="left:329px;top:618px;width:1521px;height:1px;background:#f4f4f4"></div>
<div class="t" style="left:359.6px;top:643.18px;font-size:18px;color:#1f1f1f;font-weight:normal;">Mumbai</div>
<div class="b" style="left:435px;top:637.2150000000001px;width:97.7px;height:29.6px;background:#f0fce9;border-radius:5px"></div>
<div class="t" style="left:443px;top:643.21px;font-size:15.6px;color:#3ead1d;font-weight:normal;">Compliance</div>
<div class="t" style="left:588.8px;top:643.18px;font-size:18px;color:#1f1f1f;font-weight:normal;word-spacing:-2.6px;letter-spacing:-0.2px">India - 400001</div>
<div class="t" style="left:837.4px;top:643.18px;font-size:18px;color:#1f1f1f;font-weight:normal;">Maharashtra</div>
<div class="t" style="left:1003.7px;top:643.18px;font-size:18px;color:#1f1f1f;font-weight:normal;">Mumbai</div>
<div class="t" style="left:1169.6px;top:643.18px;font-size:18px;color:#1f1f1f;font-weight:normal;">IST</div>
<div class="b" style="left:1497px;top:638.5150000000001px;width:55px;height:28px;background:#1677ff;border-radius:14px"></div>
<div class="b" style="left:1527.5px;top:642.0150000000001px;width:20px;height:20px;background:#fff;border-radius:50%;box-shadow:0 1px 1px rgba(0,0,0,.12)"></div>
<svg class="b" style="left:1609px;top:640.7150000000001px;" width="21" height="24" viewBox="0 0 21 24"><path d="M2 16.5V2.2H14.8" stroke="#7f7f7f" stroke-width="1.6" fill="none"/><rect x="6.3" y="6.2" width="12.6" height="15.5" rx="1.5" stroke="#7f7f7f" stroke-width="1.6" fill="none"/></svg>
<svg class="b" style="left:1652px;top:642.0150000000001px;" width="24" height="20" viewBox="0 0 24 20"><path d="M4.8 10.2A8.5 8.5 0 1 1 8.4 17.2" stroke="#f7a51c" stroke-width="1.9" fill="none"/><path d="M1.2 10.2h7.6L5.2 14.2z" fill="#f7a51c"/><path d="M13.3 6v4.6l3.6 2.6" stroke="#f7a51c" stroke-width="1.6" fill="none"/></svg>
<svg class="b" style="left:1698px;top:640.0150000000001px;" width="24" height="25" viewBox="0 0 24 25"><path d="M3.4 14.8L13.6 4.4 17 7.8 6.8 18.2H3.4z" fill="none" stroke="#1677ff" stroke-width="1.9" stroke-linejoin="round"/><path d="M15.2 2.6l2.6-2.6 3.5 3.5-2.6 2.6z" fill="#1677ff"/><rect x="1" y="20.7" width="21" height="3.9" fill="#1677ff"/></svg>
<div class="b" style="left:329px;top:686px;width:1521px;height:1px;background:#f4f4f4"></div>
<div class="t" style="left:359.6px;top:711.85px;font-size:18px;color:#1f1f1f;font-weight:normal;">Kolkata</div>
<div class="b" style="left:431.2px;top:705.8850000000001px;width:97.7px;height:29.6px;background:#f0fce9;border-radius:5px"></div>
<div class="t" style="left:439.2px;top:711.88px;font-size:15.6px;color:#3ead1d;font-weight:normal;">Compliance</div>
<div class="t" style="left:588.8px;top:711.85px;font-size:18px;color:#1f1f1f;font-weight:normal;word-spacing:-2.6px;letter-spacing:-0.2px">India - 700001</div>
<div class="t" style="left:837.4px;top:711.85px;font-size:18px;color:#1f1f1f;font-weight:normal;">West Bengal</div>
<div class="t" style="left:1003.7px;top:711.85px;font-size:18px;color:#1f1f1f;font-weight:normal;">Kolkata</div>
<div class="t" style="left:1169.6px;top:711.85px;font-size:18px;color:#1f1f1f;font-weight:normal;">IST</div>
<div class="b" style="left:1497px;top:707.1850000000001px;width:55px;height:28px;background:#1677ff;border-radius:14px"></div>
<div class="b" style="left:1527.5px;top:710.6850000000001px;width:20px;height:20px;background:#fff;border-radius:50%;box-shadow:0 1px 1px rgba(0,0,0,.12)"></div>
<svg class="b" style="left:1609px;top:709.3850000000001px;" width="21" height="24" viewBox="0 0 21 24"><path d="M2 16.5V2.2H14.8" stroke="#7f7f7f" stroke-width="1.6" fill="none"/><rect x="6.3" y="6.2" width="12.6" height="15.5" rx="1.5" stroke="#7f7f7f" stroke-width="1.6" fill="none"/></svg>
<svg class="b" style="left:1652px;top:710.6850000000001px;" width="24" height="20" viewBox="0 0 24 20"><path d="M4.8 10.2A8.5 8.5 0 1 1 8.4 17.2" stroke="#f7a51c" stroke-width="1.9" fill="none"/><path d="M1.2 10.2h7.6L5.2 14.2z" fill="#f7a51c"/><path d="M13.3 6v4.6l3.6 2.6" stroke="#f7a51c" stroke-width="1.6" fill="none"/></svg>
<svg class="b" style="left:1698px;top:708.6850000000001px;" width="24" height="25" viewBox="0 0 24 25"><path d="M3.4 14.8L13.6 4.4 17 7.8 6.8 18.2H3.4z" fill="none" stroke="#1677ff" stroke-width="1.9" stroke-linejoin="round"/><path d="M15.2 2.6l2.6-2.6 3.5 3.5-2.6 2.6z" fill="#1677ff"/><rect x="1" y="20.7" width="21" height="3.9" fill="#1677ff"/></svg>
<div class="b" style="left:329px;top:755px;width:1521px;height:1px;background:#f4f4f4"></div>
<div class="t" style="left:359.6px;top:780.52px;font-size:18px;color:#1f1f1f;font-weight:normal;">Moradabad</div>
<div class="t" style="left:588.8px;top:780.52px;font-size:18px;color:#1f1f1f;font-weight:normal;word-spacing:-2.6px;letter-spacing:-0.2px">India - 244415</div>
<div class="t" style="left:837.4px;top:780.52px;font-size:18px;color:#1f1f1f;font-weight:normal;">Uttar Pradesh</div>
<div class="t" style="left:1003.7px;top:780.52px;font-size:18px;color:#1f1f1f;font-weight:normal;">Moradabad</div>
<div class="t" style="left:1169.6px;top:780.52px;font-size:18px;color:#1f1f1f;font-weight:normal;">IST</div>
<div class="b" style="left:1497px;top:775.855px;width:55px;height:28px;background:#1677ff;border-radius:14px"></div>
<div class="b" style="left:1527.5px;top:779.355px;width:20px;height:20px;background:#fff;border-radius:50%;box-shadow:0 1px 1px rgba(0,0,0,.12)"></div>
<svg class="b" style="left:1609px;top:778.0550000000001px;" width="21" height="24" viewBox="0 0 21 24"><path d="M2 16.5V2.2H14.8" stroke="#7f7f7f" stroke-width="1.6" fill="none"/><rect x="6.3" y="6.2" width="12.6" height="15.5" rx="1.5" stroke="#7f7f7f" stroke-width="1.6" fill="none"/></svg>
<svg class="b" style="left:1652px;top:779.355px;" width="24" height="20" viewBox="0 0 24 20"><path d="M4.8 10.2A8.5 8.5 0 1 1 8.4 17.2" stroke="#f7a51c" stroke-width="1.9" fill="none"/><path d="M1.2 10.2h7.6L5.2 14.2z" fill="#f7a51c"/><path d="M13.3 6v4.6l3.6 2.6" stroke="#f7a51c" stroke-width="1.6" fill="none"/></svg>
<svg class="b" style="left:1698px;top:777.355px;" width="24" height="25" viewBox="0 0 24 25"><path d="M3.4 14.8L13.6 4.4 17 7.8 6.8 18.2H3.4z" fill="none" stroke="#1677ff" stroke-width="1.9" stroke-linejoin="round"/><path d="M15.2 2.6l2.6-2.6 3.5 3.5-2.6 2.6z" fill="#1677ff"/><rect x="1" y="20.7" width="21" height="3.9" fill="#1677ff"/></svg>
<div class="b" style="left:329px;top:824px;width:1521px;height:1px;background:#f4f4f4"></div>
<div class="t" style="left:359.6px;top:849.19px;font-size:18px;color:#1f1f1f;font-weight:normal;">Agra</div>
<div class="t" style="left:588.8px;top:849.19px;font-size:18px;color:#1f1f1f;font-weight:normal;word-spacing:-2.6px;letter-spacing:-0.2px">India - 282001</div>
<div class="t" style="left:837.4px;top:849.19px;font-size:18px;color:#1f1f1f;font-weight:normal;">Uttar Pradesh</div>
<div class="t" style="left:1003.7px;top:849.19px;font-size:18px;color:#1f1f1f;font-weight:normal;">Agra</div>
<div class="t" style="left:1169.6px;top:849.19px;font-size:18px;color:#1f1f1f;font-weight:normal;">IST</div>
<div class="b" style="left:1497px;top:844.5250000000001px;width:55px;height:28px;background:#1677ff;border-radius:14px"></div>
<div class="b" style="left:1527.5px;top:848.0250000000001px;width:20px;height:20px;background:#fff;border-radius:50%;box-shadow:0 1px 1px rgba(0,0,0,.12)"></div>
<svg class="b" style="left:1609px;top:846.7250000000001px;" width="21" height="24" viewBox="0 0 21 24"><path d="M2 16.5V2.2H14.8" stroke="#7f7f7f" stroke-width="1.6" fill="none"/><rect x="6.3" y="6.2" width="12.6" height="15.5" rx="1.5" stroke="#7f7f7f" stroke-width="1.6" fill="none"/></svg>
<svg class="b" style="left:1652px;top:848.0250000000001px;" width="24" height="20" viewBox="0 0 24 20"><path d="M4.8 10.2A8.5 8.5 0 1 1 8.4 17.2" stroke="#f7a51c" stroke-width="1.9" fill="none"/><path d="M1.2 10.2h7.6L5.2 14.2z" fill="#f7a51c"/><path d="M13.3 6v4.6l3.6 2.6" stroke="#f7a51c" stroke-width="1.6" fill="none"/></svg>
<svg class="b" style="left:1698px;top:846.0250000000001px;" width="24" height="25" viewBox="0 0 24 25"><path d="M3.4 14.8L13.6 4.4 17 7.8 6.8 18.2H3.4z" fill="none" stroke="#1677ff" stroke-width="1.9" stroke-linejoin="round"/><path d="M15.2 2.6l2.6-2.6 3.5 3.5-2.6 2.6z" fill="#1677ff"/><rect x="1" y="20.7" width="21" height="3.9" fill="#1677ff"/></svg>
<div class="b" style="left:1632px;top:418px;width:66.5px;height:31px;background:rgba(40,40,40,0.95);border-radius:5px"></div>
<div class="t" style="left:1642px;top:426.99px;font-size:13.6px;color:#fff;font-weight:bold;">History</div>
<div class="b" style="left:329px;top:884px;width:1527px;height:1px;background:#d9d9d9"></div>
<div class="t" style="left:1487px;top:908.79px;font-size:17.5px;color:#5f5f5f;font-weight:normal;">Rows per page</div>
<div class="t" style="left:1616.3px;top:907.26px;font-size:18px;color:#1f1f1f;font-weight:normal;">50</div>
<svg class="b" style="left:1646px;top:915px;" width="14" height="7" viewBox="0 0 14 7"><path d="M0.5 0.5h13L7 7z" fill="#6e6e6e"/></svg>
<div class="t" style="left:1688.6px;top:910.42px;font-size:13.8px;color:#1f1f1f;font-weight:normal;">1-19 of 19</div>
<svg class="b" style="left:1784px;top:911px;" width="11" height="15" viewBox="0 0 11 15"><path d="M9 1.5L2.5 7.5 9 13.5" stroke="#c8c8c8" stroke-width="1.7" fill="none"/></svg>
<svg class="b" style="left:1821px;top:911px;" width="11" height="15" viewBox="0 0 11 15"><path d="M2 1.5l6.5 6L2 13.5" stroke="#c8c8c8" stroke-width="1.7" fill="none"/></svg>
</body></html>
